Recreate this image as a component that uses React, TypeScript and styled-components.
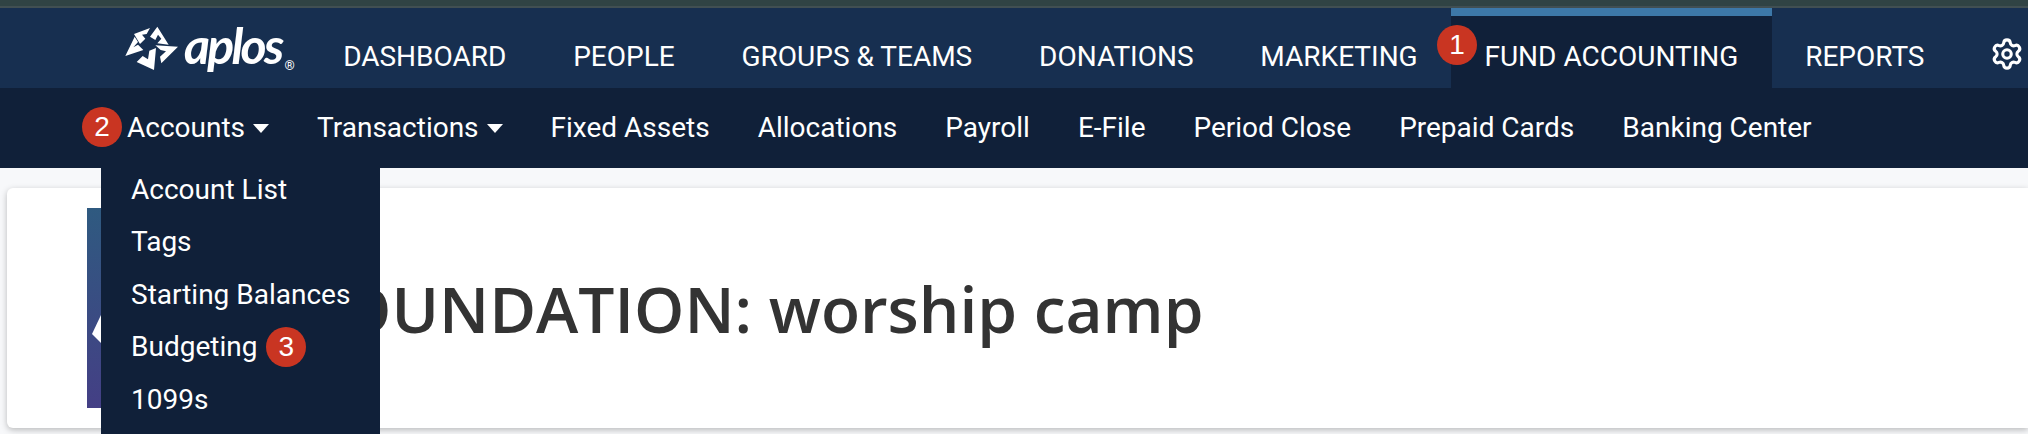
import React from "react";
import styled, { createGlobalStyle } from "styled-components";
import { Settings } from "lucide-react";

const TOP_LINKS = ["DASHBOARD", "PEOPLE", "GROUPS & TEAMS", "DONATIONS", "MARKETING", "FUND ACCOUNTING", "REPORTS"];
const SUB_LINKS = [
  { label: "Accounts", caret: true, mark: "2" },
  { label: "Transactions", caret: true },
  { label: "Fixed Assets" },
  { label: "Allocations" },
  { label: "Payroll" },
  { label: "E-File" },
  { label: "Period Close" },
  { label: "Prepaid Cards" },
  { label: "Banking Center" },
];
const MENU = ["Account List", "Tags", "Starting Balances", "Budgeting", "1099s"];

function LogoMark() {
  return (
    <svg width="56" height="49" viewBox="0 0 168 147" fill="#fff">
      <polygon points="30,30 78,12 68,30 54,32 64,44 48,60" />
      <polygon points="100,8 134,62 100,58 112,44 102,32 94,48 78,38" />
      <polygon points="94,64 162,68 112,118 108,98 126,82 110,78" />
      <polygon points="90,138 38,114 56,96 72,106 76,80 96,72" />
      <polygon points="32,38 4,96 58,78 42,62 28,70 42,54" />
    </svg>
  );
}

export default function App() {
  return (
    <Page>
      <Global />
      <Strip />
      <TopNav>
        <Logo>
          <LogoMark />
          <LogoWord>aplos</LogoWord>
          <LogoReg>®</LogoReg>
        </Logo>
        {TOP_LINKS.map((l) => (
          <TopLink key={l} $active={l === "FUND ACCOUNTING"}>
            {l === "FUND ACCOUNTING" && <TopBadge>1</TopBadge>}
            {l}
          </TopLink>
        ))}
        <Gear>
          <Settings size={34} strokeWidth={2.2} color="#fff" />
        </Gear>
      </TopNav>
      <SubNav>
        {SUB_LINKS.map((l) => (
          <SubLink key={l.label}>
            {l.mark && <SubBadge>{l.mark}</SubBadge>}
            {l.label}
            {l.caret && <Caret />}
          </SubLink>
        ))}
        <Dropdown>
          {MENU.map((m) => (
            <MenuItem key={m}>
              {m}
              {m === "Budgeting" && <Badge>3</Badge>}
            </MenuItem>
          ))}
        </Dropdown>
      </SubNav>
      <Body>
        <Card>
          <svg width="200" height="200" viewBox="0 0 200 200">
            <defs>
              <linearGradient id="cover" x1="0" y1="0" x2="0" y2="1">
                <stop offset="0" stopColor="#2f5a80" />
                <stop offset="1" stopColor="#443f85" />
              </linearGradient>
            </defs>
            <rect width="200" height="200" fill="url(#cover)" />
            <polygon points="14,107 5,126 14,135" fill="#fff" />
          </svg>
          <Title>FOUNDATION: worship camp</Title>
        </Card>
      </Body>
    </Page>
  );
}

const Global = createGlobalStyle`
  html, body {
    margin: 0;
    width: 2028px;
    height: 434px;
    overflow: hidden;
    background: #f7f8fa;
  }
`;
const Page = styled.div`
  width: 2028px;
  height: 434px;
  overflow: hidden;
  font-family: Roboto, "Liberation Sans", sans-serif;
`;
const Strip = styled.div`
  height: 6px;
  background: #304344;
  border-bottom: 2px solid #414f52;
`;
const TopNav = styled.nav`
  height: 80px;
  background: #172f50;
  display: flex;
  align-items: stretch;
  padding-left: 124px;
`;
const Logo = styled.div`
  width: 185.75px;
  display: flex;
  align-items: center;
  color: #fff;
`;
const LogoWord = styled.span`
  font-family: Lato, sans-serif;
  font-style: italic;
  font-weight: 700;
  font-size: 50px;
  line-height: 1;
  letter-spacing: -2.8px;
  margin-left: 4px;
  margin-top: -6px;
`;
const LogoReg = styled.span`
  font-size: 13px;
  margin-top: 34px;
  margin-left: 3px;
`;
const TopLink = styled.a<{ $active?: boolean }>`
  position: relative;
  display: flex;
  align-items: center;
  padding: 8px 33.4px 0;
  color: #fff;
  font-size: 28px;
  white-space: nowrap;
  box-sizing: border-box;
  background: ${(p) => (p.$active ? "#102039" : "transparent")};
  border-top: 8px solid ${(p) => (p.$active ? "#3d78a8" : "transparent")};
`;
const Gear = styled.div`
  display: flex;
  align-items: center;
  margin-left: 32px;
  padding-top: 12px;
`;
const Badge = styled.span`
  width: 40px;
  height: 40px;
  border-radius: 50%;
  background: #c93522;
  color: #fff;
  font-family: "Liberation Sans", sans-serif;
  font-size: 28px;
  display: inline-flex;
  align-items: center;
  justify-content: center;
  margin-left: 9px;
`;
const TopBadge = styled(Badge)`
  position: absolute;
  left: -14px;
  top: 9px;
  margin: 0;
`;
const SubBadge = styled(Badge)`
  position: absolute;
  left: -21px;
  top: 19px;
  margin: 0;
`;
const SubNav = styled.div`
  position: relative;
  height: 80px;
  background: #102039;
  display: flex;
  align-items: center;
  padding-left: 103px;
`;
const SubLink = styled.a`
  position: relative;
  display: flex;
  align-items: center;
  height: 78px;
  padding: 0 24px 2px;
  color: #fff;
  font-size: 28px;
  white-space: nowrap;
`;
const Caret = styled.i`
  width: 0;
  height: 0;
  margin-left: 8px;
  margin-top: 2px;
  border-left: 8px solid transparent;
  border-right: 8px solid transparent;
  border-top: 9px solid #fff;
`;
const Dropdown = styled.div`
  position: absolute;
  left: 101px;
  top: 80px;
  width: 279px;
  height: 290px;
  background: #102039;
  display: flex;
  flex-direction: column;
  gap: 10.5px;
  padding-left: 30px;
  box-sizing: border-box;
  z-index: 2;
`;
const MenuItem = styled.a`
  display: flex;
  align-items: center;
  height: 42px;
  color: #fff;
  font-size: 28px;
  white-space: nowrap;
`;
const Body = styled.main`
  padding: 20px 0 0 7px;
`;
const Card = styled.section`
  height: 240px;
  box-sizing: border-box;
  background: #fff;
  border-radius: 6px 0 0 6px;
  box-shadow: 0 2px 6px rgba(0, 0, 0, 0.25);
  padding: 20px 0 20px 80px;
  display: flex;
  align-items: center;
  gap: 20px;
`;
const Title = styled.h1`
  margin: 0;
  font-family: "Open Sans", sans-serif;
  font-weight: 600;
  font-size: 64px;
  color: #333;
  white-space: nowrap;
`;
